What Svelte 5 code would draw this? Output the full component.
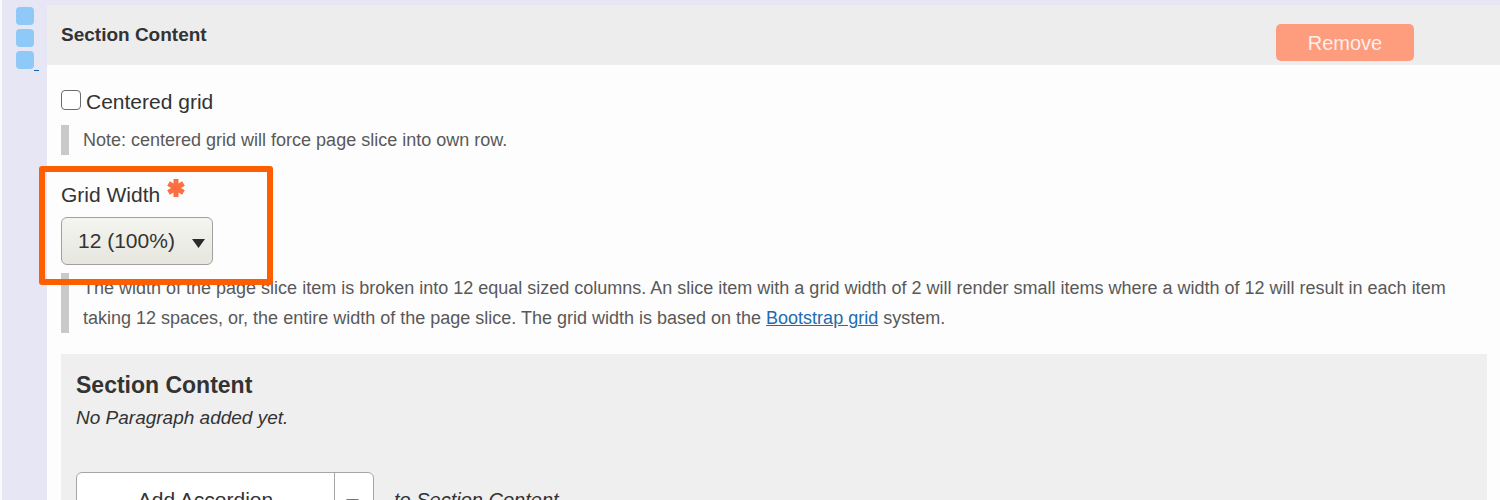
<script lang="ts">
	interface GridOption {
		value: number;
		label: string;
	}

	const gridWidths: GridOption[] = [
		{ value: 12, label: '12 (100%)' },
		{ value: 9, label: '9 (75%)' },
		{ value: 6, label: '6 (50%)' },
		{ value: 4, label: '4 (33%)' },
		{ value: 3, label: '3 (25%)' },
	];

	let centered = $state(false);
	let gridWidth = $state(12);
</script>

<div class="row">
	<div class="handle">
		<a href="#drag" aria-label="Drag to re-order">
			<svg width="18" height="62" viewBox="0 0 18 62" fill="#8ec9f8">
				<rect width="18" height="18" rx="4" />
				<rect y="22" width="18" height="18" rx="4" />
				<rect y="44" width="18" height="18" rx="4" />
			</svg>
			<span class="handle-line"></span>
		</a>
	</div>

	<div class="paragraph">
		<header class="bar">
			<h3>Section Content</h3>
			<button type="button" class="remove">Remove</button>
		</header>

		<div class="fields">
			<div class="check">
				<input type="checkbox" id="centered" bind:checked={centered} aria-describedby="centered-note" />
				<label for="centered">Centered grid</label>
			</div>
			<p class="description" id="centered-note">Note: centered grid will force page slice into own row.</p>

			<div class="field">
				<label for="grid-width">
					Grid Width
					<svg class="required" width="18" height="18" viewBox="0 0 18 18" aria-hidden="true">
						<path d="M9 0v18M1.5 4.5l15 9M16.5 4.5l-15 9" stroke="#fd6f43" stroke-width="5" fill="none" />
					</svg>
				</label>
				<div class="select">
					<select id="grid-width" bind:value={gridWidth} aria-describedby="grid-note">
						{#each gridWidths as option}
							<option value={option.value}>{option.label}</option>
						{/each}
					</select>
					<svg class="caret" width="13" height="9" viewBox="0 0 13 9" aria-hidden="true">
						<path d="M0 0h13L6.5 9z" fill="#2b2b2b" />
					</svg>
				</div>
				<div class="highlight"></div>
			</div>
			<p class="description" id="grid-note">
				The width of the page slice item is broken into 12 equal sized columns. An slice item with a grid width of 2
				will render small items where a width of 12 will result in each item taking 12 spaces, or, the entire width of
				the page slice. The grid width is based on the <a href="#grid">Bootstrap grid</a> system.
			</p>

			<section class="nested">
				<h4>Section Content</h4>
				<p class="empty">No Paragraph added yet.</p>
				<div class="add">
					<div class="dropbutton">
						<button type="button" class="add-main">Add Accordion</button>
						<button type="button" class="add-toggle" aria-label="List additional actions">
							<svg width="13" height="8" viewBox="0 0 13 8" aria-hidden="true">
								<path d="M0 0h13L6.5 8z" fill="#777" />
							</svg>
						</button>
					</div>
					<span class="target">to <em>Section Content</em></span>
				</div>
			</section>
		</div>
	</div>
</div>

<style>
	:global(body) {
		margin: 0;
		background: #fdfdfd;
	}

	.row {
		display: flex;
		height: 100vh;
		overflow: hidden;
		box-sizing: border-box;
		border-left: 2px solid #fafafd;
		font-family: 'Liberation Sans', Arial, sans-serif;
		font-size: 21px;
		line-height: 30px;
		color: #333;
	}

	h3,
	h4,
	p {
		margin: 0;
	}

	.handle {
		flex: none;
		width: 45px;
		background: #e6e6f4;
	}

	.handle a {
		display: flex;
		align-items: flex-end;
		width: 24px;
		margin: 7px 0 0 14px;
	}

	.handle svg {
		display: block;
	}

	.handle-line {
		width: 5px;
		height: 1px;
		margin-bottom: -2px;
		background: #0f5fae;
	}

	.paragraph {
		flex: 1;
		min-width: 0;
		border-top: 5px solid #e6e6f6;
	}

	.bar {
		display: flex;
		align-items: center;
		justify-content: space-between;
		height: 60px;
		padding: 0 86px 0 14px;
		background: #ededed;
	}

	.bar h3 {
		font-size: 19px;
		font-weight: 700;
	}

	.remove {
		width: 138px;
		height: 37px;
		margin-top: 15px;
		border: 0;
		border-radius: 5px;
		background: #fe9c7e;
		color: #fdeee8;
		font: inherit;
		font-size: 20px;
	}

	.fields {
		padding: 22px 13px 0 14px;
	}

	.check {
		display: flex;
		align-items: center;
		gap: 5px;
		margin-bottom: 8px;
	}

	.check input {
		appearance: none;
		box-sizing: border-box;
		width: 20px;
		height: 20px;
		margin: 0 0 4px;
		border: 1px solid #6c6c6c;
		border-radius: 4px;
		background: #fff;
	}

	.check input:checked {
		background: #0074bd;
	}

	.description {
		padding-left: 14px;
		border-left: 8px solid #c9c9c9;
		font-size: 18px;
		color: #595959;
	}

	.description a {
		color: #1f6cb0;
	}

	.field {
		position: relative;
		padding: 25px 0 8px;
	}

	.field label {
		display: flex;
		gap: 7px;
	}

	.required {
		margin-top: -1px;
	}

	.select {
		display: grid;
		width: 152px;
		margin-top: 7px;
	}

	.select > * {
		grid-area: 1 / 1;
	}

	.select select {
		appearance: none;
		height: 48px;
		padding: 0 36px 0 16px;
		border: 1px solid #a0a0a0;
		border-radius: 6px;
		background: linear-gradient(#f5f5f0, #e6e6df);
		color: #333;
		font: inherit;
	}

	.caret {
		align-self: center;
		justify-self: end;
		margin: 4px 8px 0 0;
		pointer-events: none;
	}

	/* callout frame drawn over the field and the text below it */
	.highlight {
		position: absolute;
		top: 11px;
		bottom: -12px;
		left: -22px;
		width: 222px;
		border: 6px solid #fd5f00;
		border-radius: 3px;
		pointer-events: none;
	}

	.nested {
		margin-top: 21px;
		padding: 16px 15px 40px;
		background: #efefef;
	}

	.nested h4 {
		font-size: 23px;
		font-weight: 700;
	}

	.empty {
		font-size: 19px;
		font-style: italic;
		line-height: 36px;
	}

	.add {
		display: flex;
		align-items: center;
		gap: 20px;
		margin-top: 36px;
		font-size: 21px;
	}

	.dropbutton {
		display: flex;
		box-sizing: border-box;
		width: 298px;
		height: 56px;
		border: 1px solid #a6a6a6;
		border-radius: 6px;
		background: #fff;
	}

	.dropbutton button {
		border: 0;
		background: none;
		color: #333;
		font: inherit;
	}

	.add-main {
		flex: 1;
	}

	.dropbutton .add-toggle {
		width: 39px;
		padding: 4px 4px 0 0;
		border-left: 1px solid #a6a6a6;
	}

	.dropbutton .add-toggle svg {
		vertical-align: middle;
	}

	.target {
		font-size: 20px;
		font-style: italic;
	}
</style>
